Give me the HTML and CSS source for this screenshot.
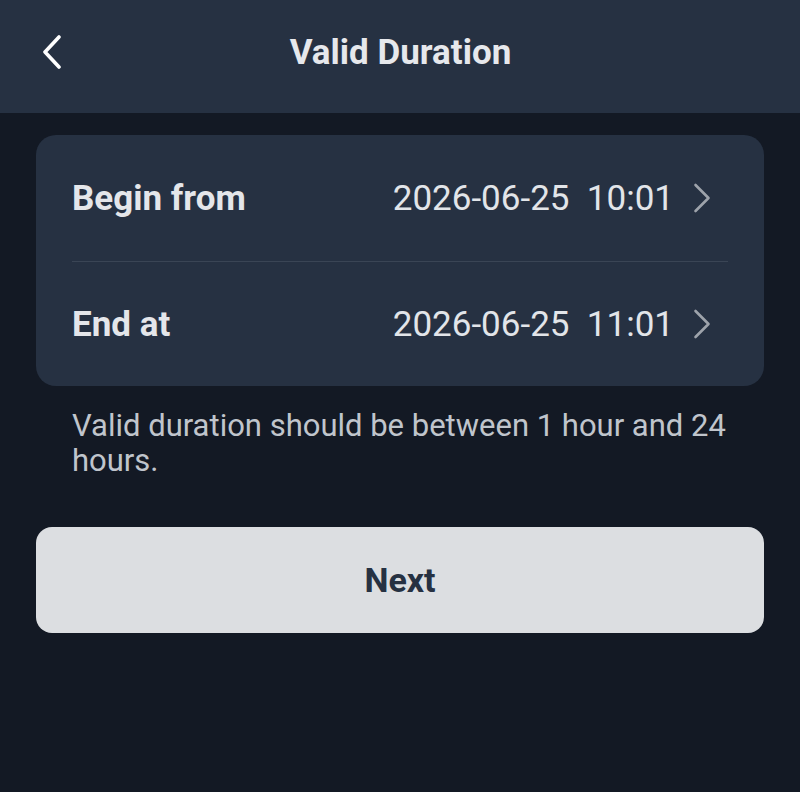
FILE: index.html
```html
<!DOCTYPE html>
<html lang="en">
<head>
<meta charset="utf-8">
<title>Valid Duration</title>
<link rel="stylesheet" href="styles.css">
</head>
<body>
<header class="topbar">
  <button class="back" aria-label="Back">
    <svg width="22" height="34" viewBox="0 0 22 34"><path d="M18 2 L4 17 L18 32" fill="none" stroke="#ffffff" stroke-width="3.6" stroke-linecap="round" stroke-linejoin="round"/></svg>
  </button>
  <h1 class="title">Valid Duration</h1>
  <span></span>
</header>
<main class="content">
  <section class="card">
    <div class="row row-first">
      <span class="label">Begin from</span>
      <span class="value"><span class="date">2026-06-25  10:01</span><svg class="chev" width="20" height="30" viewBox="0 0 20 30"><path d="M3.5 2 L16.5 15 L3.5 28" fill="none" stroke="#9ea3ab" stroke-width="2.6" stroke-linecap="round" stroke-linejoin="round"/></svg></span>
    </div>
    <div class="row row-last">
      <span class="label">End at</span>
      <span class="value"><span class="date">2026-06-25  11:01</span><svg class="chev" width="20" height="30" viewBox="0 0 20 30"><path d="M3.5 2 L16.5 15 L3.5 28" fill="none" stroke="#9ea3ab" stroke-width="2.6" stroke-linecap="round" stroke-linejoin="round"/></svg></span>
    </div>
  </section>
  <p class="note">Valid duration should be between 1 hour and 24 hours.</p>
  <button class="next">Next</button>
</main>
</body>
</html>
```
FILE: styles.css
```css
* { box-sizing: border-box; }
html, body {
  margin: 0;
  padding: 0;
  background: #131924;
  font-family: Roboto, "Liberation Sans", sans-serif;
  color: #e4e6ea;
}
.topbar {
  height: 113px;
  padding: 0 0 9px 41px;
  background: #263142;
  display: grid;
  grid-template-columns: 1fr auto 1fr;
  align-items: center;
}
.back {
  background: none;
  border: 0;
  padding: 0;
  width: 22px;
  height: 34px;
  display: flex;
}
.title {
  margin: 0;
  font-size: 35px;
  font-weight: 700;
  color: #e6e8ec;
  line-height: normal;
  transform: translateX(-20px);
}
.content {
  padding: 22px 36px 0;
  display: flex;
  flex-direction: column;
}
.card {
  background: #263142;
  border-radius: 20px;
  padding: 0 36px;
}
.row {
  display: flex;
  align-items: center;
  justify-content: space-between;
}
.row-first {
  height: 127px;
  border-bottom: 1px solid #3a4555;
}
.row-last {
  height: 124px;
}
.label {
  font-size: 35px;
  font-weight: 700;
  color: #e4e6ea;
}
.value {
  display: flex;
  align-items: center;
  margin-right: 16px;
}
.date {
  font-size: 35px;
  white-space: pre;
  color: #e2e5e9;
}
.chev {
  margin-left: 18px;
}
.note {
  margin: 22px 0 0;
  padding: 0 36px;
  font-size: 31px;
  line-height: 35px;
  color: #c0c5cc;
}
.next {
  margin-top: 49px;
  height: 106px;
  border: 0;
  border-radius: 16px;
  background: #dcdee1;
  color: #263142;
  font-family: Roboto, "Liberation Sans", sans-serif;
  font-size: 34px;
  font-weight: 700;
}
```
